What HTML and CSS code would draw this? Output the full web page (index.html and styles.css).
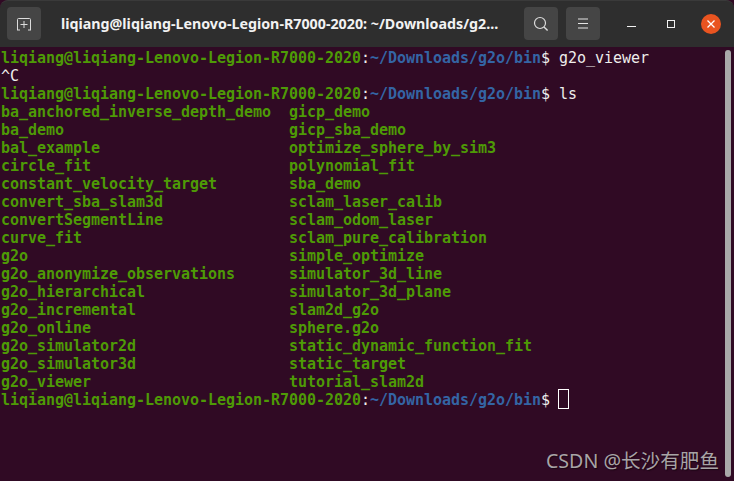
FILE: index.html
```html
<!DOCTYPE html>
<html lang="en">
<head>
<meta charset="utf-8">
<title>Terminal</title>
<link rel="stylesheet" href="styles.css">
</head>
<body>
<div class="window">
  <header class="titlebar">
    <button class="tool new-tab" aria-label="New tab">
      <svg width="16" height="16" viewBox="0 0 16 16"><path d="M1.5 14V3.5a1 1 0 0 1 1-1h11a1 1 0 0 1 1 1V14M8 5v7M4.5 8.5h7M1 14h3M12 14h3" fill="none" stroke="#dcdcdc" stroke-width="1"/></svg>
    </button>
    <div class="title">liqiang@liqiang-Lenovo-Legion-R7000-2020: ~/Downloads/g2...</div>
    <button class="tool search" aria-label="Search">
      <svg width="16" height="16" viewBox="0 0 16 16"><circle cx="7" cy="7" r="5.5" fill="none" stroke="#dcdcdc" stroke-width="1.2"/><path d="M11 11l3.6 3.6" stroke="#dcdcdc" stroke-width="1.4"/></svg>
    </button>
    <button class="tool menu" aria-label="Menu">
      <svg width="12" height="11" viewBox="0 0 12 11"><path d="M1 1h10M1 5.500h10M1 10h10" stroke="#e4e4e4" stroke-width="1"/></svg>
    </button>
    <div class="controls">
      <svg class="minimize" width="10" height="10" viewBox="0 0 10 10"><path d="M0 7.500h9" stroke="#f2f2f2" stroke-width="1"/></svg>
      <svg class="maximize" width="10" height="10" viewBox="0 0 10 10"><rect x="1.500" y="1.500" width="7" height="7" fill="none" stroke="#f2f2f2" stroke-width="1"/></svg>
      <span class="close">
        <svg width="10" height="10" viewBox="0 0 10 10"><path d="M1.500 1.500l7 7M8.500 1.500l-7 7" stroke="#fff" stroke-width="1.300"/></svg>
      </span>
    </div>
  </header>
  <main class="terminal">
<pre class="screen"><span class="g">liqiang@liqiang-Lenovo-Legion-R7000-2020</span>:<span class="b">~/Downloads/g2o/bin</span>$ g2o_viewer
^C
<span class="g">liqiang@liqiang-Lenovo-Legion-R7000-2020</span>:<span class="b">~/Downloads/g2o/bin</span>$ ls
<span class="g">ba_anchored_inverse_depth_demo  gicp_demo
ba_demo                         gicp_sba_demo
bal_example                     optimize_sphere_by_sim3
circle_fit                      polynomial_fit
constant_velocity_target        sba_demo
convert_sba_slam3d              sclam_laser_calib
convertSegmentLine              sclam_odom_laser
curve_fit                       sclam_pure_calibration
g2o                             simple_optimize
g2o_anonymize_observations      simulator_3d_line
g2o_hierarchical                simulator_3d_plane
g2o_incremental                 slam2d_g2o
g2o_online                      sphere.g2o
g2o_simulator2d                 static_dynamic_function_fit
g2o_simulator3d                 static_target
g2o_viewer                      tutorial_slam2d
liqiang@liqiang-Lenovo-Legion-R7000-2020</span>:<span class="b">~/Downloads/g2o/bin</span>$ <span class="cursor"></span></pre>
    <div class="scrollbar"></div>
    <div class="watermark">CSDN @长沙有肥鱼</div>
  </main>
</div>
</body>
</html>
```
FILE: styles.css
```css
* { box-sizing: border-box; }
html, body { margin: 0; padding: 0; height: 100%; background: #300a24; overflow: hidden; }
.window { width: 734px; height: 481px; display: flex; flex-direction: column; }
.titlebar {
  height: 47px; flex: none; display: flex; align-items: center;
  background: #2e2e2e; border-top: 1px solid #3a3a3a; border-radius: 8px 8px 0 0;
  padding: 0 7px 1px 7px;
}
.tool {
  width: 34px; height: 33px; padding: 0; border: 0; border-radius: 4px; background: #454545;
  display: flex; align-items: center; justify-content: center; flex: none;
}
.title {
  margin-left: 20px; width: 461px; flex: none; color: #f2f2f2; white-space: nowrap;
  font: bold 14.26px "Noto Sans", sans-serif;
}
.search { margin-left: 2px; }
.menu { margin-left: 8px; }
.controls { display: flex; align-items: center; margin-left: 27px; flex: none; }
.minimize { margin-right: 29px; }
.maximize { margin-right: 25px; }
.close {
  width: 20px; height: 20px; border-radius: 50%; background: #e95420;
  display: flex; align-items: center; justify-content: center;
}
.terminal { flex: 1; position: relative; background: #300a24; padding: 2px 0 0 1px; }
.screen {
  margin: 0; color: #eeeeec; font: 15px/18px "DejaVu Sans Mono", monospace; letter-spacing: -0.03px;
}
.g { color: #4e9a06; font-weight: bold; }
.b { color: #3465a4; font-weight: bold; }
.cursor {
  display: inline-block; width: 11px; height: 20px; margin: -2px 0 0 -1px; border: 1px solid #fff; vertical-align: -4px;
}
.scrollbar {
  position: absolute; top: 3px; right: 3px; bottom: 4px; width: 6px; border-radius: 3px; background: #a9a9a9;
}
.watermark {
  position: absolute; right: 15px; bottom: 7px; color: #a8a4a6; font: 19.6px "Noto Sans", "Noto Sans CJK SC", sans-serif;
  text-shadow: 1px 1px 1px #1a0514;
}
```
